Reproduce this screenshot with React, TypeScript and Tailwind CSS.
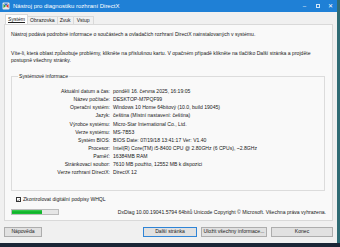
import React from 'react';

const rows: [string, string][] = [
  ['Aktuální datum a čas', 'pondělí 16. června 2025, 16:19:05'],
  ['Název počítače', 'DESKTOP-M7PQF99'],
  ['Operační systém', 'Windows 10 Home 64bitový (10.0, build 19045)'],
  ['Jazyk', 'čeština (Místní nastavení: čeština)'],
  ['Výrobce systému', 'Micro-Star International Co., Ltd.'],
  ['Verze systému', 'MS-7B53'],
  ['Systém BIOS', 'BIOS Date: 07/19/18 13:41:17 Ver: V1.40'],
  ['Procesor', 'Intel(R) Core(TM) i5-8400 CPU @ 2.80GHz (6 CPUs), ~2.8GHz'],
  ['Paměť', '16384MB RAM'],
  ['Stránkovací soubor', '7610 MB použito, 12552 MB k dispozici'],
  ['Verze rozhraní DirectX', 'DirectX 12'],
];

function DxIcon() {
  return (
    <svg width="8" height="8" viewBox="0 0 16 16">
      <rect x="1" y="1" width="14" height="14" rx="2" fill="#e8e8e8" />
      <path d="M3 4 L8 8 L3 12 Z" fill="#2e9e3a" />
      <path d="M13 4 L8 8 L13 12 Z" fill="#d9342b" />
      <path d="M4 3 L8 8 L12 3 Z" fill="#2a6fd1" />
    </svg>
  );
}

function Btn({ label, w, primary }: { label: string; w: string; primary?: boolean }) {
  return (
    <div
      className={`${w} h-[10px] flex items-center justify-center border bg-[#e1e1e1] text-[#1a1a1a] ${
        primary ? 'border-[#2f84d6]' : 'border-[#adadad]'
      }`}
    >
      {label}
    </div>
  );
}

export default function App() {
  return (
    <div
      className="w-[340px] h-[247px] flex flex-col overflow-hidden bg-[#1b2636] text-[5.1px] leading-none text-[#202020]"
      style={{ fontFamily: '"Liberation Sans", Arial, sans-serif' }}
    >
      <div className="flex h-[243px]">
        <div className="w-[337px] flex flex-col bg-[#f0f0f0]">
          {/* title bar */}
          <div className="h-[12px] flex items-center bg-[#1f80d6] text-white pl-[2px]">
            <DxIcon />
            <span className="ml-[3px] text-[6px]">Nástroj pro diagnostiku rozhraní DirectX</span>
            <div className="ml-auto flex items-center h-full text-[6px]">
              <span className="w-[13px] text-center">–</span>
              <span className="w-[13px] flex justify-center">
                <span className="w-[4px] h-[4px] border border-white/80" />
              </span>
              <span className="w-[13px] text-center">✕</span>
            </div>
          </div>

          {/* tabs */}
          <div className="flex items-end h-[12px] pl-[5px]">
            <div className="h-[10px] px-[2px] flex items-center bg-white border border-b-0 border-[#d9d9d9] underline">Systém</div>
            <div className="h-[8px] px-[2px] flex items-center border-t border-r border-[#d9d9d9]">Obrazovka</div>
            <div className="h-[8px] px-[2px] flex items-center border-t border-r border-[#d9d9d9]">Zvuk</div>
            <div className="h-[8px] px-[3px] flex items-center border-t border-r border-[#d9d9d9]">Vstup</div>
          </div>

          {/* tab panel */}
          <div className="mx-[4px] h-[197px] border border-[#d9d9d9] bg-[#f9f9f9] px-[6px] pt-[7px] flex flex-col">
            <p>Nástroj podává podrobné informace o součástech a ovladačích rozhraní DirectX nainstalovaných v systému.</p>
            <p className="mt-[13px] leading-[7px]">
              Víte-li, která oblast způsobuje problémy, klikněte na příslušnou kartu. V opačném případě klikněte na tlačítko Další stránka a projděte
              <br />
              postupně všechny stránky.
            </p>

            <fieldset className="mt-[10px] mr-[1px] h-[117px] border border-[#dcdcdc] px-[4px]">
              <legend className="ml-[2px] px-[1px]">Systémové informace</legend>
              <div className="mt-[8px] grid grid-cols-[94px_1fr] gap-x-[3px] leading-[8.1px]">
                {rows.map(([k, v]) => (
                  <React.Fragment key={k}>
                    <span className="text-right">{k}:</span>
                    <span>{v}</span>
                  </React.Fragment>
                ))}
              </div>
            </fieldset>

            <div className="mt-[6px] ml-[5px] flex items-center gap-[2px]">
              <span className="w-[5px] h-[5px] border border-[#333] bg-white flex items-center justify-center">
                <svg width="4" height="4" viewBox="0 0 8 8">
                  <path d="M1 4 L3 6 L7 1.5" fill="none" stroke="#222" strokeWidth="1.3" />
                </svg>
              </span>
              <span>Zkontrolovat digitální podpisy WHQL</span>
            </div>

            <div className="mt-[7px] flex items-center">
              <div className="w-[48px] h-[6px] border border-[#bcbcbc] bg-[#e6e6e6]">
                <div className="w-[30px] h-full bg-gradient-to-b from-[#3fd257] via-[#06b025] to-[#20c03a]" />
              </div>
              <span className="ml-auto">DxDiag 10.00.19041.5794 64bitů Unicode Copyright © Microsoft. Všechna práva vyhrazena.</span>
            </div>
          </div>

          {/* buttons */}
          <div className="flex items-center mt-[6px] px-[4px]">
            <Btn label="Nápověda" w="w-[38px]" />
            <div className="ml-auto flex gap-[4px]">
              <Btn label="Další stránka" w="w-[54px]" primary />
              <Btn label="Uložit všechny informace..." w="w-[66px]" />
              <Btn label="Konec" w="w-[62px]" />
            </div>
          </div>
        </div>
        <div className="w-[3px] bg-[#2f6b74]" />
      </div>
    </div>
  );
}
